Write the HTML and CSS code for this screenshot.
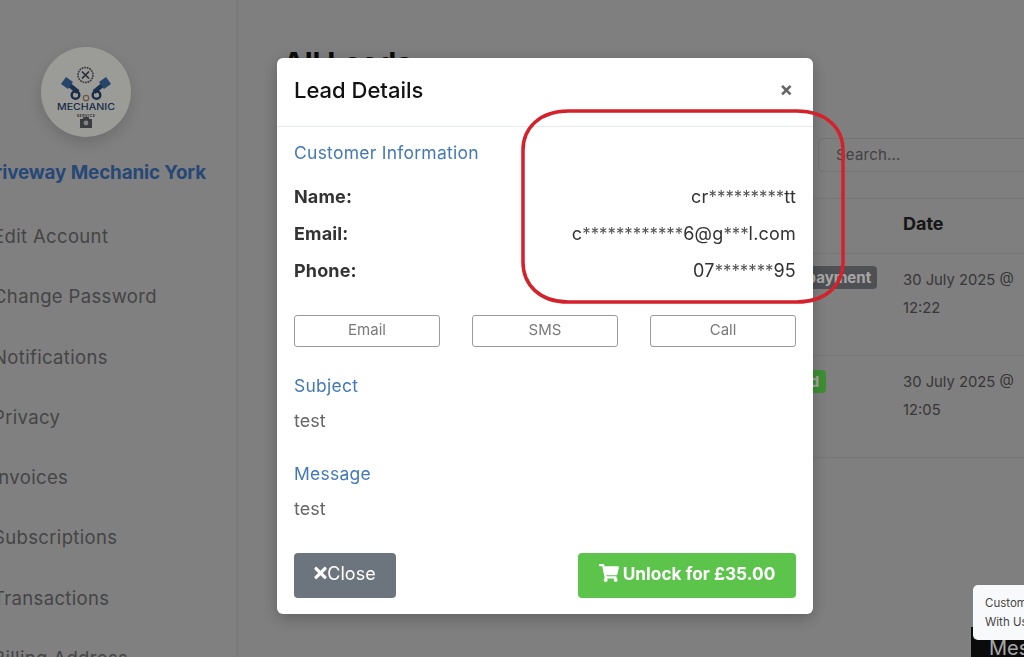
FILE: index.html
```html
<!DOCTYPE html>
<html lang="en">
<head>
<meta charset="utf-8">
<title>Lead Details</title>
<link rel="stylesheet" href="styles.css">
</head>
<body>
<div class="page">
  <aside class="sidebar">
    <div class="avatar">
      <svg class="logo" viewBox="0 0 90 90" width="90" height="90" aria-hidden="true">
        <circle cx="44.500" cy="28" r="7.500" fill="none" stroke="#55585e" stroke-width="1.600" stroke-dasharray="1.800 .8"/>
        <path d="M41 24.500l7 7M48 24.500l-7 7" stroke="#3b4454" stroke-width="1.600"/>
        <path d="M26 36l11 9M64 36l-11 9" stroke="#2f4d78" stroke-width="4.500"/>
        <path d="M20 37l5-7 7 5-5 7zM70 37l-5-7-7 5 5 7z" fill="#3d6ba0"/>
        <circle cx="34.500" cy="48" r="3.800" fill="none" stroke="#27436d" stroke-width="2.400"/>
        <circle cx="55.500" cy="48" r="3.800" fill="none" stroke="#27436d" stroke-width="2.400"/>
        <circle cx="45" cy="51" r="2.700" fill="none" stroke="#a5876e" stroke-width="1.300"/>
        <text class="logo-word" x="45" y="63" text-anchor="middle" textLength="58" lengthAdjust="spacingAndGlyphs">MECHANIC</text>
        <text class="logo-sub" x="45" y="69.500" text-anchor="middle">SERVICE</text>
        <path d="M39 72h2.500l1-2h5l1 2H51v9H39z" fill="#5b5d62"/>
        <circle cx="45" cy="76" r="2.400" fill="#c9c9c9"/>
      </svg>
    </div>
    <h2 class="biz-name">Driveway Mechanic York</h2>
    <nav class="side-nav">
      <a>Edit Account</a>
      <a>Change Password</a>
      <a>Notifications</a>
      <a>Privacy</a>
      <a>Invoices</a>
      <a>Subscriptions</a>
      <a>Transactions</a>
      <a>Billing Address</a>
    </nav>
  </aside>
  <main class="main">
    <h1 class="page-title">All Leads</h1>
    <div class="search-row"><div class="search">Search...</div></div>
    <div class="table">
      <div class="row head"><span class="status"></span><span class="date">Date</span></div>
      <div class="row tall">
        <span class="status"><b class="badge dark">Awaiting payment</b></span>
        <span class="date">30 July 2025 @ 12:22</span>
      </div>
      <div class="row tall">
        <span class="status"><b class="badge green">Completed</b></span>
        <span class="date">30 July 2025 @ 12:05</span>
      </div>
    </div>
  </main>
  <div class="msg-btn">Message</div>
</div>

<div class="backdrop">
  <section class="modal">
    <header class="modal-head">
      <h3>Lead Details</h3>
      <span class="x">×</span>
    </header>
    <div class="modal-body">
      <h4 class="label first">Customer Information</h4>
      <dl class="info">
        <div><dt>Name:</dt><dd>cr<span class="mask">*********</span>tt</dd></div>
        <div><dt>Email:</dt><dd>c<span class="mask">************</span>6@g<span class="mask">***</span>l.com</dd></div>
        <div><dt>Phone:</dt><dd>07<span class="mask">*******</span>95</dd></div>
      </dl>
      <div class="contact">
        <a>Email</a><a>SMS</a><a>Call</a>
      </div>
      <h4 class="label subject">Subject</h4>
      <p class="val">test</p>
      <h4 class="label message">Message</h4>
      <p class="val">test</p>
    </div>
    <footer class="modal-foot">
      <button class="btn grey">
        <svg class="ico-x" viewBox="0 0 352 512" aria-hidden="true"><path fill="currentColor" d="M242.720 256l100.070-100.070c12.280-12.280 12.280-32.190 0-44.480l-22.240-22.240c-12.280-12.280-32.190-12.280-44.480 0L176 189.280 75.930 89.210c-12.280-12.280-32.190-12.280-44.480 0L9.210 111.450c-12.280 12.280-12.280 32.190 0 44.480L109.280 256 9.210 356.070c-12.280 12.280-12.280 32.190 0 44.480l22.240 22.240c12.280 12.280 32.200 12.280 44.480 0L176 322.720l100.070 100.070c12.280 12.280 32.200 12.280 44.480 0l22.240-22.240c12.280-12.280 12.280-32.190 0-44.480L242.720 256z"/></svg>Close
      </button>
      <button class="btn unlock">
        <svg class="ico-cart" viewBox="0 0 576 512" aria-hidden="true"><path fill="currentColor" d="M528.120 301.319l47.273-208C578.806 78.301 567.391 64 551.990 64H159.208l-9.166-44.810C147.758 8.021 137.930 0 126.529 0H24C10.745 0 0 10.745 0 24v16c0 13.255 10.745 24 24 24h69.883l70.248 343.435C147.325 417.100 136 435.222 136 456c0 30.928 25.072 56 56 56s56-25.072 56-56c0-15.674-6.447-29.835-16.824-40h209.647C430.447 426.165 424 440.326 424 456c0 30.928 25.072 56 56 56s56-25.072 56-56c0-22.172-12.888-41.332-31.579-50.405l5.517-24.276c3.413-15.018-8.002-29.319-23.403-29.319H218.117l-6.545-32h293.145c11.206 0 20.920-7.754 23.403-18.681z"/></svg>Unlock for £35.00
      </button>
    </footer>
  </section>
</div>

<svg class="annotation" viewBox="0 0 1024 657" width="1024" height="657" aria-hidden="true">
  <path d="M568 111H797C826 111 843 128 843 150V262C843 285 826 302 797 302H568C540 302 523 285 523 262V150C523 128 540 111 568 111Z" fill="none" stroke="#d3222c" stroke-width="3.500"/>
</svg>

<div class="chat-tip">Customer Chat<br>With Us</div>
</body>
</html>
```
FILE: styles.css
```css
* { box-sizing: border-box; }
html, body { margin: 0; height: 100%; overflow: hidden; }
body { font-family: Inter, "Noto Sans", "Liberation Sans", sans-serif; background: #c3c3c3; color: #333; }

.page { display: flex; width: 1024px; height: 657px; overflow: hidden; position: relative; }
.sidebar { width: 245px; flex: none; margin-left: -7px; border-right: 2px solid #bebebe; display: flex; flex-direction: column; background: #c5c5c5; padding-top: 47px; }
.avatar { width: 90px; height: 90px; margin-left: 48px; border-radius: 50%; background: #eeeeea; box-shadow: 0 6px 14px rgba(0,0,0,.14); }
.logo { display: block; }
.logo-word { font-size: 8.500px; font-weight: 500; fill: #27436d; font-family: Inter, sans-serif; }
.logo-sub { font-size: 3.600px; font-weight: 600; fill: #444; letter-spacing: .5px; font-family: Inter, sans-serif; }
.biz-name { margin: 24px 0 0 -12px; font-size: 18.800px; line-height: 24px; font-weight: 700; color: #3d6fb5; white-space: nowrap; letter-spacing: -.1px; }
.side-nav { display: flex; flex-direction: column; margin-top: 39px; }
.side-nav a { height: 60.300px; line-height: 24px; font-size: 18.500px; letter-spacing: .35px; color: #6a6a6a; white-space: nowrap; }

.main { flex: 1; min-width: 0; padding: 41px 0 0 45px; }
.page-title { margin: 0; font-size: 29px; line-height: 44px; font-weight: 700; color: #111; white-space: nowrap; }
.search-row { display: flex; justify-content: flex-end; margin-top: 53px; margin-right: -10px; }
.search { width: 216px; height: 34px; border: 1px solid #b2b2b2; border-radius: 4px; padding-left: 17px; font-size: 15px; letter-spacing: .2px; line-height: 31px; color: #666; }
.table { margin-top: 26px; border-top: 1px solid #b5b5b5; }
.row { display: flex; justify-content: flex-end; gap: 26px; border-bottom: 1px solid #b5b5b5; }
.status { display: block; width: 145px; flex: none; }
.head { height: 55px; align-items: center; padding-bottom: 4px; }
.head .date { font-size: 18px; font-weight: 700; color: #222; }
.tall { height: 102px; padding-top: 12px; }
.date { width: 121px; flex: none; font-size: 14.800px; line-height: 28px; color: #555; }
.badge { display: block; height: 23px; line-height: 23px; padding: 0 7px; border-radius: 4px; font-size: 15px; color: #fff; white-space: nowrap; text-align: right; }
.dark { width: 145px; background: #7a7c82; }
.green { width: 94px; background: #5fdc50; margin-top: 2px; }

.msg-btn { position: absolute; left: 971px; top: 627px; width: 120px; height: 30px; background: #111; color: #fff; font-size: 20px; line-height: 42px; padding-left: 18px; white-space: nowrap; }

.backdrop { position: fixed; inset: 0; background: rgba(0,0,0,.35); display: flex; align-items: flex-start; padding: 58px 0 0 277px; }
.modal { width: 536px; height: 556px; background: #fff; border-radius: 6px; display: flex; flex-direction: column; box-shadow: 0 4px 16px rgba(0,0,0,.25); }
.modal-head { height: 69px; flex: none; border-bottom: 1px solid #e9ecef; display: flex; justify-content: space-between; align-items: center; padding: 0 20px 4px 17px; }
.modal-head h3 { margin: 0; font-size: 22px; line-height: 28px; font-weight: 500; color: #111; }
.x { font-size: 20px; font-weight: 700; color: #666; line-height: 20px; margin-top: -2px; }
.modal-body { flex: 1; padding: 0 17px; }
.label { margin: 0; font-size: 17.500px; letter-spacing: .25px; line-height: 24px; font-weight: 400; color: #4478b8; }
.label.first { padding-top: 14px; }
.label.subject { padding-top: 27px; }
.label.message { padding-top: 29px; }
.info { margin: 13px 0 0; }
.info div { display: flex; justify-content: space-between; height: 37px; line-height: 37px; white-space: nowrap; }
.info dt { font-weight: 700; font-size: 18px; letter-spacing: .15px; color: #333; }
.info dd { margin: 0; font-size: 18px; letter-spacing: .2px; color: #333; }
.mask { font-size: 16.800px; letter-spacing: 0; color: #555; }
.contact { display: grid; grid-template-columns: repeat(3, 1fr); gap: 32px; margin-top: 26px; }
.contact a { height: 32px; line-height: 28px; text-align: center; border: 1px solid #9a9a9a; border-radius: 3px; font-size: 15px; color: #7a7a7a; }
.val { margin: 11px 0 0; font-size: 18px; line-height: 24px; color: #666; }
.modal-foot { flex: none; display: flex; justify-content: space-between; padding: 0 17px 16px; }
.btn { height: 45px; border: 0; border-radius: 4px; color: #fff; font: inherit; font-size: 18px; display: flex; align-items: center; justify-content: center; padding-bottom: 6px; }
.grey { width: 102px; background: #6c757d; }
.unlock { width: 218px; background: #5cc34b; font-weight: 700; font-size: 17.300px; }
.ico-x { width: 13px; height: 18px; }
.ico-cart { width: 20px; height: 18px; margin-right: 4px; }

.annotation { position: fixed; left: 0; top: 0; pointer-events: none; }
.chat-tip { position: fixed; left: 973px; top: 585px; width: 130px; height: 55px; background: #f8f9fa; border-radius: 5px; padding: 9px 12px; font-size: 11.500px; line-height: 19px; color: #444; white-space: nowrap; }
```
